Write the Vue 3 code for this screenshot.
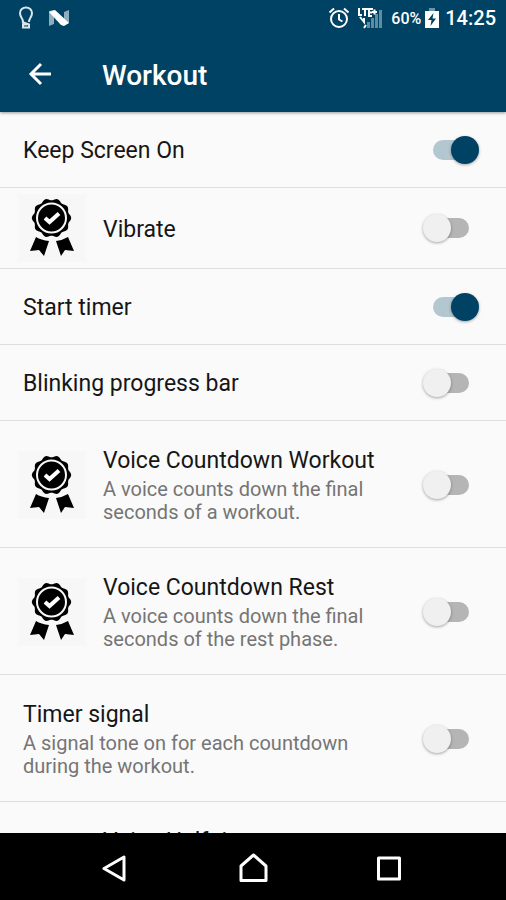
<template>
  <div class="screen">
    <header class="header">
      <div class="status-bar">
        <div class="status-left">
          <svg width="16" height="24" viewBox="0 0 16 24" fill="none" stroke="#dbe6ec" stroke-width="2">
            <path d="M5 16 C5 12 2 11.500 2 7 A6 5.500 0 0 1 14 7 C14 11.500 11 12 11 16" />
            <path d="M4 16 L11 18.500 V21.500 H5 V18.500 H9" />
          </svg>
          <svg width="22" height="18" viewBox="0 0 22 18">
            <path d="M1 2 L6 1 V15 L1 17 Z" fill="#8fadbd" />
            <path d="M16 3 L21 1 V14 L16 16 Z" fill="#8fadbd" />
            <path d="M1 3 L7 1 L21 14 L16 17 L13 16 Z" fill="#fff" />
          </svg>
        </div>
        <div class="status-right">
          <svg width="22" height="22" viewBox="0 0 22 22" fill="none" stroke="#fff" stroke-width="2">
            <circle cx="11" cy="12" r="8" />
            <path d="M11 7 V12.500 L14.500 14.500 M1.500 5.500 L6 1.500 M20.500 5.500 L16 1.500" />
          </svg>
          <svg class="signal" width="26" height="22" viewBox="0 0 26 22">
            <path d="M10 15 h3 v6 h-3 z M14 11 h3 v10 h-3 z M18 7 h3 v14 h-3 z M22 3 h3 v18 h-3 z" fill="#5f8ba3" />
            <path d="M2 1 V8 H5 M5 2 H11 M8 2 V9 M16 2 H12 V9 H15 M12 5.500 H15 M15 5 H20 M17.500 2.500 V7.500" fill="none" stroke="#fff" stroke-width="2" />
            <path d="M3 10 L7 15 V11 M7 21 L9 18" fill="none" stroke="#fff" stroke-width="2" />
          </svg>
          <span class="battery-text">60%</span>
          <svg class="battery" width="14" height="20" viewBox="0 0 14 20">
            <path d="M4 0 H10 V3 H4 Z" fill="#6f93a8" />
            <path d="M0 3 H14 V20 H0 Z" fill="#fff" />
            <path d="M8.500 5 L3 12 H6.500 L5.500 18 L11 10.500 H7.500 Z" fill="#004264" />
          </svg>
          <span class="clock">14:25</span>
        </div>
      </div>
      <div class="toolbar">
        <button class="back-button" type="button" aria-label="Back">
          <svg width="24" height="24" viewBox="0 0 24 24" fill="none" stroke="#fff" stroke-width="3">
            <path d="M23 12 H3 M13 2 L3 12 L13 22" />
          </svg>
        </button>
        <h1>Workout</h1>
      </div>
    </header>

    <main class="settings">
      <label v-for="item in settings" :key="item.id" class="row" :class="{ tall: item.tall }" :for="item.id">
        <span v-if="item.premium" class="badge">
          <svg width="68" height="68" viewBox="0 0 68 68">
            <path :d="rosette" />
            <circle cx="33.500" cy="24" r="14.500" fill="none" stroke="#f8f8f8" stroke-width="2" />
            <path d="M27 24 L31.500 28 L41 19.500" fill="none" stroke="#fff" stroke-width="4" />
            <path d="M18 43 Q23 46 31 47 L26 62 L21 56 L12 57 Z" />
            <path d="M50 43 Q45 46 38 47 L43 62 L47 56 L56 57 Z" />
          </svg>
        </span>
        <span class="texts">
          <span class="title">{{ item.title }}</span>
          <span v-if="item.summary" class="summary">{{ item.summary }}</span>
        </span>
        <input :id="item.id" v-model="item.on" type="checkbox" role="switch" class="switch" />
      </label>
    </main>

    <nav class="nav-bar">
      <button type="button" aria-label="Back">
        <svg width="30" height="30" viewBox="0 0 30 30" fill="none" stroke="#fff" stroke-width="3" stroke-linejoin="round">
          <path d="M22 5 V28 L2 16.500 Z" />
        </svg>
      </button>
      <button type="button" aria-label="Home">
        <svg width="30" height="30" viewBox="0 0 30 30" fill="none" stroke="#fff" stroke-width="3" stroke-linejoin="round">
          <path d="M3 14 L15.500 3 L28 14 V28.500 H3 Z" />
        </svg>
      </button>
      <button type="button" aria-label="Recent apps">
        <svg width="30" height="30" viewBox="0 0 30 30" fill="none" stroke="#fff" stroke-width="3" stroke-linejoin="round">
          <rect x="4.500" y="6" width="21" height="21" />
        </svg>
      </button>
    </nav>
  </div>
</template>

<script setup>
import { ref } from 'vue'

const settings = ref([
  { id: 'screen', title: 'Keep Screen On', on: true },
  { id: 'vibrate', title: 'Vibrate', premium: true, on: false },
  { id: 'start', title: 'Start timer', on: true },
  { id: 'blink', title: 'Blinking progress bar', on: false },
  { id: 'voice-workout', title: 'Voice Countdown Workout', summary: 'A voice counts down the final seconds of a workout.', premium: true, tall: true, on: false },
  { id: 'voice-rest', title: 'Voice Countdown Rest', summary: 'A voice counts down the final seconds of the rest phase.', premium: true, tall: true, on: false },
  { id: 'signal', title: 'Timer signal', summary: 'A signal tone on for each countdown during the workout.', tall: true, on: false },
  { id: 'voice-half', title: 'Voice Half time', premium: true, tall: true, on: false }
])

// Scalloped edge of the medal
const points = []
for (let i = 0; i < 120; i++) {
  const a = (i / 120) * Math.PI * 2
  const r = 18.7 + Math.cos(a * 10 + Math.PI)
  points.push(`${(33.5 + r * Math.sin(a)).toFixed(1)} ${(24 - r * Math.cos(a)).toFixed(1)}`)
}
const rosette = `M${points.join('L')}Z`
</script>

<style>
body {
  background: #000;
}
</style>

<style scoped>
.screen {
  display: flex;
  flex-direction: column;
  height: 100vh;
  background: #fafafa;
  font-family: Roboto, "Liberation Sans", sans-serif;
}

svg {
  display: block;
  flex-shrink: 0;
}

button {
  display: flex;
  align-items: center;
  justify-content: center;
  padding: 0;
  border: none;
  background: none;
  cursor: pointer;
}

.header {
  flex-shrink: 0;
  background: #004264;
  color: #fff;
  box-shadow: 0 1px 3px rgba(0, 0, 0, 0.4);
  z-index: 1;
}

.status-bar {
  display: flex;
  justify-content: space-between;
  height: 36px;
  padding: 0 10px 0 18px;
}

.status-left,
.status-right {
  display: flex;
  align-items: center;
}

.status-left {
  gap: 14px;
}

.signal {
  margin: 0 8px 0 7px;
}

.battery-text {
  font-size: 16px;
  font-weight: 500;
}

.battery {
  margin: 0 6px 0 4px;
}

.clock {
  font-size: 20px;
  font-weight: 500;
}

.toolbar {
  display: flex;
  align-items: center;
  height: 76px;
}

.back-button {
  width: 80px;
  height: 48px;
  margin-right: 22px;
}

h1 {
  margin: 0;
  padding-top: 2px;
  font-size: 28px;
  font-weight: 500;
}

.settings {
  flex: 1;
  min-height: 0;
  overflow: hidden;
}

.row {
  display: flex;
  align-items: center;
  box-sizing: border-box;
  min-height: 76px;
  padding: 6px 37px 6px 23px;
  border-bottom: 1px solid #dedede;
  cursor: pointer;
}

.row.tall {
  min-height: 127px;
  padding-top: 8px;
}

.badge {
  width: 68px;
  height: 68px;
  margin: 0 17px 0 -5px;
  background: #f7f7f7;
}

.texts {
  flex: 1;
  padding: 3px 40px 0 0;
}

.tall .texts {
  align-self: flex-start;
  padding-top: 18px;
}

.title {
  display: block;
  font-size: 23px;
  line-height: 28px;
  color: #161616;
}

.summary {
  display: block;
  padding-top: 3px;
  font-size: 20px;
  line-height: 23px;
  color: #757575;
}

.switch {
  appearance: none;
  position: relative;
  flex-shrink: 0;
  width: 36px;
  height: 20px;
  margin: 0;
  border-radius: 10px;
  background: #b5b5b5;
  cursor: pointer;
}

.switch::before {
  content: "";
  position: absolute;
  top: -4px;
  left: -10px;
  width: 28px;
  height: 28px;
  border-radius: 50%;
  background: #f0f0f0;
  box-shadow: 0 1px 3px rgba(0, 0, 0, 0.35);
}

.switch:checked {
  background: #b3c7d0;
}

.switch:checked::before {
  left: 18px;
  background: #004264;
}

.nav-bar {
  display: flex;
  flex-shrink: 0;
  align-items: center;
  justify-content: center;
  gap: 106px;
  height: 67px;
  background: #000;
}
</style>
